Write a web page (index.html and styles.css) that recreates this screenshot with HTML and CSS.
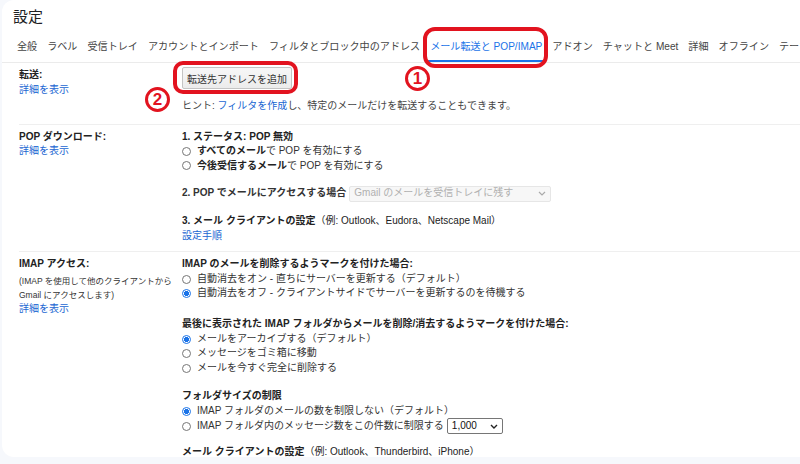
FILE: index.html
```html
<!DOCTYPE html>
<html lang="ja">
<head>
    <meta charset="UTF-8">
    <meta name="viewport" content="width=device-width, initial-scale=1.0">
    <title>設定 - メール転送と POP/IMAP</title>
    <link rel="stylesheet" href="styles.css">
</head>
<body>
    <div class="page">
        <div class="card">
            <h1 class="title">設定</h1>
            <nav class="tabs">
                <span class="tab">全般</span>
                <span class="tab">ラベル</span>
                <span class="tab">受信トレイ</span>
                <span class="tab">アカウントとインポート</span>
                <span class="tab">フィルタとブロック中のアドレス</span>
                <span class="tab active">メール転送と POP/IMAP</span>
                <span class="tab">アドオン</span>
                <span class="tab">チャットと Meet</span>
                <span class="tab">詳細</span>
                <span class="tab">オフライン</span>
                <span class="tab">テーマ</span>
            </nav>

            <div class="sections">
                <section class="row row-forward">
                    <div class="label">
                        <b>転送:</b>
                        <a href="#">詳細を表示</a>
                    </div>
                    <div class="content">
                        <button class="btn">転送先アドレスを追加</button>
                        <p class="hint">ヒント: <a href="#">フィルタを作成</a>し、特定のメールだけを転送することもできます。</p>
                    </div>
                </section>

                <section class="row">
                    <div class="label">
                        <b>POP ダウンロード:</b>
                        <a href="#">詳細を表示</a>
                    </div>
                    <div class="content">
                        <p class="head">1. ステータス: POP 無効</p>
                        <label class="opt"><input type="radio" name="pop"><span><b>すべてのメール</b>で POP を有効にする</span></label>
                        <label class="opt"><input type="radio" name="pop"><span><b>今後受信するメール</b>で POP を有効にする</span></label>
                        <div class="line pop-access">
                            <b>2. POP でメールにアクセスする場合</b>
                            <div class="select disabled">
                                <span>Gmail のメールを受信トレイに残す</span>
                                <svg width="8" height="5" viewBox="0 0 8 5"><path d="M1 1l3 3 3-3" fill="none" stroke="#aaa" stroke-width="1.2"/></svg>
                            </div>
                        </div>
                        <p class="head pop-client"><b>3. メール クライアントの設定</b>（例: Outlook、Eudora、Netscape Mail）</p>
                        <a href="#">設定手順</a>
                    </div>
                </section>

                <section class="row">
                    <div class="label">
                        <b>IMAP アクセス:</b>
                        <p class="note">(IMAP を使用して他のクライアントから<br>Gmail にアクセスします)</p>
                        <a href="#">詳細を表示</a>
                    </div>
                    <div class="content">
                        <p class="head">IMAP のメールを削除するようマークを付けた場合:</p>
                        <label class="opt"><input type="radio" name="expunge"><span>自動消去をオン - 直ちにサーバーを更新する（デフォルト）</span></label>
                        <label class="opt"><input type="radio" name="expunge" checked><span>自動消去をオフ - クライアントサイドでサーバーを更新するのを待機する</span></label>

                        <p class="head group-2">最後に表示された IMAP フォルダからメールを削除/消去するようマークを付けた場合:</p>
                        <label class="opt"><input type="radio" name="deleted" checked><span>メールをアーカイブする（デフォルト）</span></label>
                        <label class="opt"><input type="radio" name="deleted"><span>メッセージをゴミ箱に移動</span></label>
                        <label class="opt"><input type="radio" name="deleted"><span>メールを今すぐ完全に削除する</span></label>

                        <p class="head group-3">フォルダサイズの制限</p>
                        <label class="opt"><input type="radio" name="limit" checked><span>IMAP フォルダのメールの数を制限しない（デフォルト）</span></label>
                        <div class="opt opt-tall">
                            <input type="radio" name="limit"><span>IMAP フォルダ内のメッセージ数をこの件数に制限する</span>
                            <div class="select small">
                                <span>1,000</span>
                                <svg width="8" height="5" viewBox="0 0 8 5"><path d="M1 1l3 3 3-3" fill="none" stroke="#222" stroke-width="1.4"/></svg>
                            </div>
                        </div>

                        <p class="head group-4"><b>メール クライアントの設定</b>（例: Outlook、Thunderbird、iPhone）</p>
                    </div>
                </section>
            </div>
        </div>

        <!-- annotations -->
        <div class="mark mark-tab"></div>
        <div class="mark mark-btn"></div>
        <div class="num num-1">1</div>
        <div class="num num-2">2</div>
    </div>
</body>
</html>
```

FILE: styles.css
```css
* {
    margin: 0;
    padding: 0;
    box-sizing: border-box;
}

body {
    font-family: "Liberation Sans", "Noto Sans CJK JP", sans-serif;
    background: #f6f8fc;
    color: #222;
    font-size: 10px;
    line-height: 14.5px;
    width: 800px;
    height: 464px;
    overflow: hidden;
}

a {
    color: #1a66d2;
    text-decoration: none;
}

.page {
    position: relative;
    width: 800px;
    height: 464px;
}

.card {
    margin-left: 2px;
    width: 798px;
    height: 457px;
    background: #fff;
    border-radius: 12px 0 0 12px;
    overflow: hidden;
}

.title {
    font-size: 15px;
    font-weight: normal;
    line-height: 18px;
    padding: 8px 0 0 11px;
    color: #202124;
}

.tabs {
    display: flex;
    gap: 10px;
    padding-left: 15px;
    border-bottom: 1px solid #ebebeb;
    white-space: nowrap;
    color: #444;
    font-size: 10.1px;
}

.tab {
    padding: 14px 0 6px;
    line-height: 14px;
    border-bottom: 2px solid transparent;
}

.tab.active {
    color: #1a73e8;
    border-bottom-color: #1a73e8;
    padding-left: 3px;
    padding-right: 3px;
    margin: 0 -3px;
}

.sections {
    margin-left: 17px;
}

.row {
    display: grid;
    grid-template-columns: 163px 1fr;
    padding: 5px 0 8px;
    border-top: 1px solid #efefef;
}

.row-forward {
    border-top: none;
    padding: 4px 0 10px;
}

.row-forward .label {
    padding-top: 1px;
}

.label {
    display: flex;
    flex-direction: column;
    align-items: flex-start;
}

.label b {
    color: #222;
}

.note {
    font-size: 8.5px;
    line-height: 14px;
    margin-top: 2px;
    color: #333;
}

.content {
    display: flex;
    flex-direction: column;
    align-items: flex-start;
    color: #333;
}

.head {
    font-weight: bold;
    color: #222;
}

.pop-client {
    font-weight: normal;
    margin-top: 12.75px;
}

.group-2 {
    margin-top: 16.5px;
}

.group-3 {
    margin-top: 14px;
}

.group-4 {
    font-weight: normal;
    margin-top: 11px;
}

.btn {
    font-family: inherit;
    font-size: 10px;
    color: #333;
    height: 22px;
    width: 110px;
    background: linear-gradient(#f7f7f7, #ececec);
    border: 1px solid #c4c4c4;
    border-radius: 2px;
}

.hint {
    margin-top: 10px;
    color: #444;
}

.opt {
    display: flex;
    align-items: center;
    height: 14.5px;
}

.opt b {
    color: #222;
}

.opt input {
    appearance: none;
    width: 9px;
    height: 9px;
    border: 1px solid #767676;
    border-radius: 50%;
    margin-right: 6px;
    background: #fff;
}

.opt input:checked {
    border-color: #1a73e8;
    background: radial-gradient(circle, #1a73e8 0 2.3px, #fff 2.6px);
}

.opt-tall {
    height: 16px;
}

.line {
    display: flex;
    align-items: center;
    gap: 3px;
}

.pop-access {
    margin-top: 12.5px;
    height: 16px;
}

.select {
    display: flex;
    align-items: center;
    justify-content: space-between;
    height: 16px;
    padding: 0 4px;
    border-radius: 2px;
}

.select.disabled {
    width: 202px;
    background: #f7f7f7;
    border: 1px solid #e6e6e6;
    color: #b0b0b0;
}

.select.small {
    flex: none;
    width: 56px;
    margin-left: 3px;
    border: 1px solid #767676;
    color: #111;
    background: #fff;
}

/* annotations */
.mark {
    position: absolute;
    border: 4px solid #e2131f;
}

.mark-tab {
    left: 423px;
    top: 27px;
    width: 125px;
    height: 41px;
    border-radius: 12px;
}

.mark-btn {
    left: 173px;
    top: 61px;
    width: 125px;
    height: 33px;
    border-radius: 10px;
}

.num {
    position: absolute;
    width: 25px;
    height: 25px;
    border: 3px solid #e2131f;
    border-radius: 50%;
    color: #e2131f;
    font-weight: bold;
    font-size: 17px;
    line-height: 19px;
    text-align: center;
}

.num-1 {
    left: 405px;
    top: 66px;
}

.num-2 {
    left: 145px;
    top: 87px;
}
```
